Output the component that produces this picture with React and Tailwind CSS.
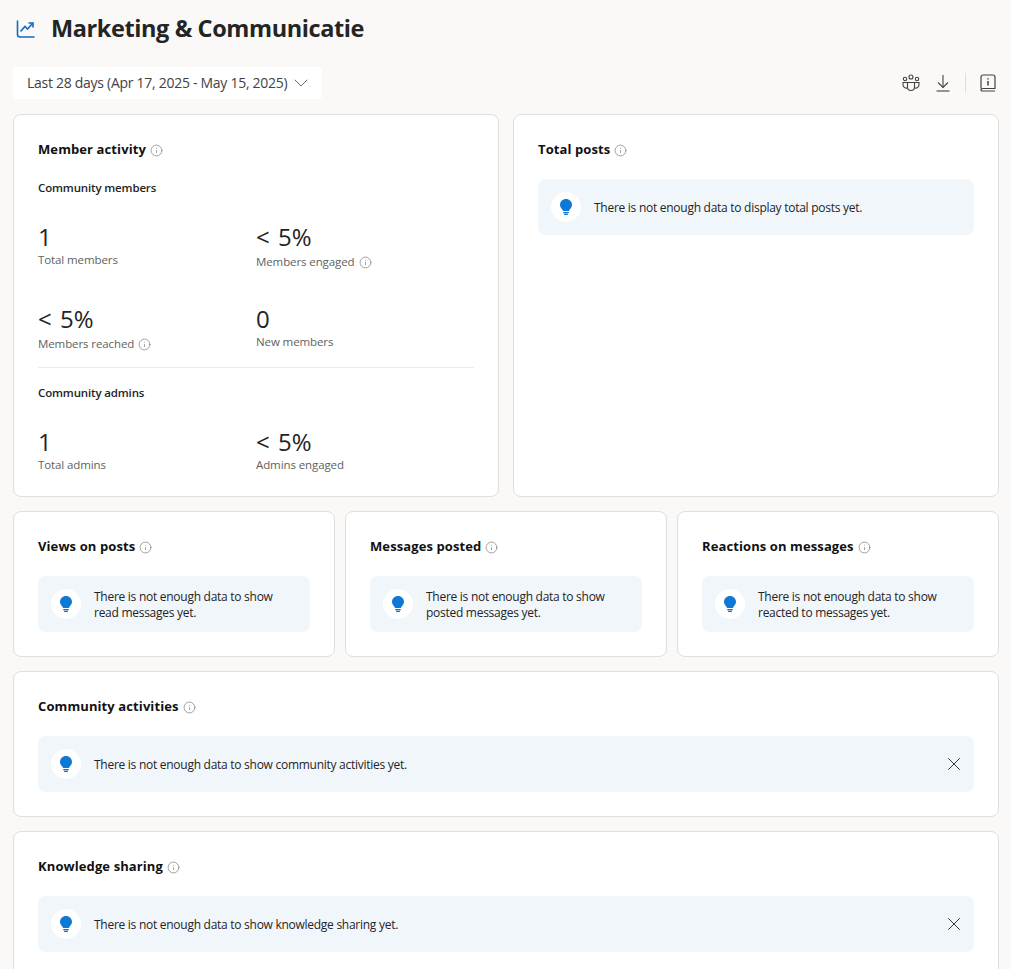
import React from 'react';
import { Info, ChevronDown, X } from 'lucide-react';

const InfoDot = () => <Info size={13} strokeWidth={1.25} className="text-[#757575] ml-[4px] shrink-0" />;

const TrendIcon = () => (
   <svg width="20" height="20" viewBox="0 0 20 20" fill="none" stroke="#0f6cbd" strokeWidth="1.6" className="shrink-0">
      <path d="M1.5 1.5V15.5C1.5 17 2.5 18 4 18H18.5" />
      <path d="M4.5 12.5L9 7.5L11.5 10L16.5 4.5" />
      <path d="M12.5 4H17V8.5" />
   </svg>
);

const PeopleIcon = () => (
   <svg width="18" height="18" viewBox="0 0 18 18" fill="none" stroke="#424242" strokeWidth="1.1">
      <circle cx="9" cy="3" r="2" />
      <circle cx="3" cy="5" r="1.7" />
      <circle cx="15" cy="5" r="1.7" />
      <path d="M5.5 8.5H12.5V13C12.5 15 11 16.5 9 16.5C7 16.5 5.5 15 5.5 13V8.5Z" />
      <path d="M5.5 14C3 14.5 1 13 1 10.5V8.5H5" />
      <path d="M12.5 14C15 14.5 17 13 17 10.5V8.5H13" />
   </svg>
);

const DownloadIcon = () => (
   <svg width="14" height="18" viewBox="0 0 14 18" fill="none" stroke="#424242" strokeWidth="1.1">
      <path d="M7 1V13.5" />
      <path d="M2 8.5L7 13.5L12 8.5" />
      <path d="M.5 17H13.5" />
   </svg>
);

const BookIcon = () => (
   <svg width="16" height="18" viewBox="0 0 16 18" fill="none" stroke="#424242" strokeWidth="1.2">
      <path d="M1 14.5V3C1 1.8 1.8 1 3 1H13C14.2 1 15 1.8 15 3V14.5H3C1.8 14.5 1 15.2 1 16C1 16.6 1.5 17 2.5 17H15" />
      <path d="M8 4.2V5.4M8 7V11.5" strokeWidth="1.5" />
   </svg>
);

const Notice = ({ text, closable }) => (
   <div className="flex items-center bg-[#f1f6fb] rounded-lg h-14 pl-[13px] pr-[14px]">
      <div className="w-[30px] h-[30px] rounded-full bg-white flex items-center justify-center shrink-0">
         <svg width="12" height="16" viewBox="0 0 12 16" fill="#0f78d4">
            <path d="M6 0C2.7 0 0 2.6 0 5.8C0 7.6 .8 8.9 1.8 10C2.6 10.8 3 11.4 3 12H9C9 11.4 9.4 10.8 10.2 10C11.2 8.9 12 7.6 12 5.8C12 2.6 9.3 0 6 0Z" />
            <path d="M3.2 13H8.8V13.6C8.8 14.2 8.4 14.4 8 14.4H4C3.6 14.4 3.2 14.2 3.2 13.6Z" />
            <rect x="4" y="15" width="4" height="1" rx=".5" />
         </svg>
      </div>
      <p className="ml-[13px] pt-[2px] text-[12px] leading-4 text-[#242424] flex-1 tracking-[-0.27px]">{text}</p>
      {closable && <X size={22} strokeWidth={1} className="text-[#242424] mr-[-5px]" />}
   </div>
);

const Card = ({ title, className, children }) => (
   <div className={`bg-white border border-[#e0dfdd] rounded-lg px-6 ${className}`}>
      <div className="flex items-center h-5 mt-[25px] mb-[19px]">
         <h3 className="text-[13px] font-bold text-[#111] tracking-[0.1px]">{title}</h3>
         <InfoDot />
      </div>
      {children}
   </div>
);

const Stat = ({ value, label, info }) => (
   <div>
      <div className="text-[24px] leading-[30px] text-[#242424] [word-spacing:2px]">{value}</div>
      {/* labels with an info icon sit in a taller row */}
      <div className={`flex items-center text-[11.5px] text-[#616161] tracking-[-0.1px] ${info ? 'h-5' : 'h-4'}`}>
         {label}
         {info && <InfoDot />}
      </div>
   </div>
);

const App = () => {
   return (
      <div className="h-[969px] overflow-hidden bg-[#faf9f8] font-['Open_Sans','Noto_Sans',sans-serif] pl-[13px] pr-3">
         {/* Header */}
         <div className="flex items-center pt-[13px] h-[44px] pl-[3px]">
            <TrendIcon />
            <h1 className="ml-[15px] text-[23.5px] font-bold text-[#242424] tracking-[-0.4px] whitespace-nowrap">Marketing &amp; Communicatie</h1>
         </div>

         {/* Toolbar */}
         <div className="flex items-center justify-between mt-[23px] h-8">
            <button className="flex items-center bg-white rounded h-8 pl-[14px] pr-[9px] text-[14px] text-[#424242] tracking-[-0.28px] whitespace-nowrap">
               <span className="pb-px">Last 28 days (Apr 17, 2025 - May 15, 2025)</span>
               <ChevronDown size={24} strokeWidth={0.8} className="ml-[2px] text-[#424242]" />
            </button>
            <div className="flex items-center pr-[3px]">
               <PeopleIcon />
               <div className="ml-[16px]"><DownloadIcon /></div>
               <div className="w-px h-5 bg-[#e0dfdd] ml-[15px] mr-[14px]" />
               <BookIcon />
            </div>
         </div>

         <div className="grid grid-cols-2 gap-[14px] mt-[15px]">
            <Card title="Member activity" className="h-[383px]">
               <h4 className="text-[11.5px] font-semibold leading-4 text-[#242424] pt-px tracking-[-0.15px]">Community members</h4>
               <div className="grid grid-cols-2 mt-[26px] gap-y-[32px]">
                  <Stat value="1" label="Total members" />
                  <Stat value="< 5%" label="Members engaged" info />
                  <Stat value="< 5%" label="Members reached" info />
                  <Stat value="0" label="New members" />
               </div>
               <div className="border-t border-[#edebe9] mt-[13px]" />
               <h4 className="text-[11.5px] font-semibold leading-4 text-[#242424] mt-[17px] tracking-[-0.15px]">Community admins</h4>
               <div className="grid grid-cols-2 mt-[26px]">
                  <Stat value="1" label="Total admins" />
                  <Stat value="< 5%" label="Admins engaged" />
               </div>
            </Card>
            <Card title="Total posts" className="h-[383px]">
               <Notice text="There is not enough data to display total posts yet." />
            </Card>
         </div>

         <div className="grid grid-cols-3 gap-[10px] mt-[14px]">
            <Card title="Views on posts" className="h-[146px]">
               <Notice text="There is not enough data to show read messages yet." />
            </Card>
            <Card title="Messages posted" className="h-[146px]">
               <Notice text="There is not enough data to show posted messages yet." />
            </Card>
            <Card title="Reactions on messages" className="h-[146px]">
               <Notice text="There is not enough data to show reacted to messages yet." />
            </Card>
         </div>

         <Card title="Community activities" className="h-[146px] mt-[14px]">
            <Notice closable text="There is not enough data to show community activities yet." />
         </Card>
         <Card title="Knowledge sharing" className="h-[146px] mt-[14px]">
            <Notice closable text="There is not enough data to show knowledge sharing yet." />
         </Card>
      </div>
   );
};

export default App;
